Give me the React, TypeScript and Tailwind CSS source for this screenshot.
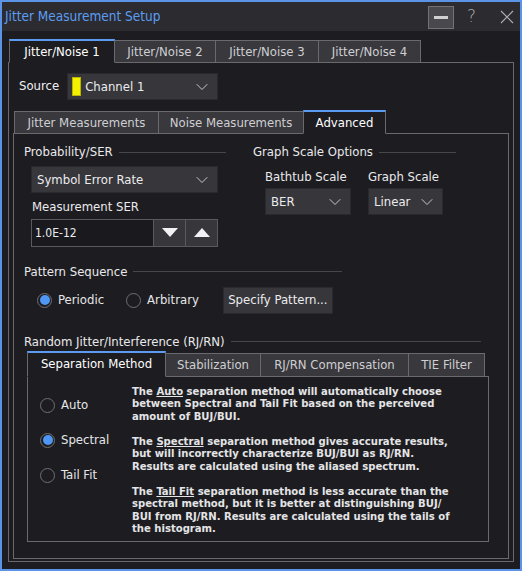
import { ChevronDown } from "lucide-react";

const font = "font-['DejaVu_Sans_Condensed','DejaVu_Sans',sans-serif]";

const Tab = ({ label, active, w, tall }: { label: string; active?: boolean; w: string; tall?: boolean }) => (
    <div
        className={`${w} relative flex items-center justify-center text-[13px] border border-[#6a6a6e] -mr-px ${
            active
                ? `${tall ? "h-[26px]" : "h-[24px]"} bg-[#1d1d21] text-white border-t-2 border-t-[#5b9cf2] border-b-[#1d1d21] z-10`
                : `${tall ? "h-[24px]" : "h-[23px]"} bg-[#38383d] text-[#cfcfd2]`
        }`}
    >
        {label}
    </div>
);

const Dropdown = ({ label, w, swatch }: { label: string; w: string; swatch?: boolean }) => (
    <div className={`${w} h-[27px] flex items-center bg-[#36363b] border border-[#2a2a2e] pl-[4px] pr-[5px] text-[13px] text-[#ececee]`}>
        {swatch && <span className="w-[9px] h-[19px] bg-[#f5f000] mr-[3px] border border-[#b8b400]" />}
        <span className="flex-1 pl-[1px]">{label}</span>
        <ChevronDown size={20} strokeWidth={1.2} className="text-[#c8c8cc]" />
    </div>
);

const GroupHeader = ({ label, lineW }: { label: string; lineW: string }) => (
    <div className="flex items-center h-[18px]">
        <span className="text-[13px] text-[#eaeaec] whitespace-nowrap">{label}</span>
        <span className={`${lineW} h-px bg-[#46464b] ml-[6px]`} />
    </div>
);

const Radio = ({ label, checked }: { label: string; checked?: boolean }) => (
    <div className="flex items-center gap-[6px] h-[19px] text-[13px] text-[#e6e6e8]">
        <span className="w-[15px] h-[15px] rounded-full border-[1.5px] border-[#707074] bg-[#1d1d21] flex items-center justify-center">
            {checked && <span className="w-[10px] h-[10px] rounded-full bg-[#4e97f5]" />}
        </span>
        {label}
    </div>
);

const App = () => {
    return (
        <div className={`${font} w-[522px] h-[571px] border-2 border-[#5b94e6] bg-[#1d1d21] flex flex-col`}>
            {/* title bar */}
            <div className="h-[29px] bg-[#2b2b30] flex items-center pl-[3px] pr-[6px]">
                <span className="flex-1 text-[13.5px] text-[#5c9df2]">Jitter Measurement Setup</span>
                <div className="w-[26px] h-[23px] mt-[2px] bg-[#48484d] border border-[#727276] flex items-center justify-center">
                    <span className="w-[14px] h-[3px] bg-[#d0d0d2]" />
                </div>
                <span className="ml-[13px] mt-[1px] text-[17px] text-[#a8a8ac] font-['DejaVu_Sans',sans-serif] font-extralight">?</span>
                <svg width="14" height="14" viewBox="0 0 14 14" className="ml-[24px] mt-[1px]">
                    <path d="M1 1 L13 13 M13 1 L1 13" stroke="#b0b0b4" strokeWidth="1.1" />
                </svg>
            </div>

            {/* outer tabs */}
            <div className="mt-[8px] ml-[7px] flex items-end">
                <Tab label="Jitter/Noise 1" active w="w-[106px]" />
                <Tab label="Jitter/Noise 2" w="w-[102px]" />
                <Tab label="Jitter/Noise 3" w="w-[104px]" />
                <Tab label="Jitter/Noise 4" w="w-[103px]" />
            </div>
            <div className="ml-[6px] w-[506px] h-[500px] -mt-px border border-[#6a6a6e] flex flex-col">
                <div className="flex items-center mt-[10px] ml-[10px]">
                    <span className="text-[13px] text-[#f0f0f2] mr-[8px] -mt-[1px]">Source</span>
                    <Dropdown label="Channel 1" swatch w="w-[151px] h-[26px]" />
                </div>

                {/* inner tabs */}
                <div className="mt-[10px] ml-[5px] flex items-end">
                    <Tab label="Jitter Measurements" w="w-[145px]" />
                    <Tab label="Noise Measurements" w="w-[146px]" />
                    <Tab label="Advanced" active w="w-[83px]" />
                </div>
                <div className="ml-[4px] w-[496px] h-[426px] -mt-px border border-[#6a6a6e] pl-[10px] pt-[9px] flex flex-col">
                    <div className="flex">
                        <div className="w-[229px]">
                            <GroupHeader label="Probability/SER" lineW="w-[107px]" />
                            <div className="mt-[5px] ml-[7px]">
                                <Dropdown label="Symbol Error Rate" w="w-[187px]" />
                            </div>
                            <div className="mt-[4px] ml-[8px] text-[13px] text-[#eaeaec]">Measurement SER</div>
                            <div className="mt-[2px] ml-[7px] w-[187px] h-[28px] flex border border-[#5a5a5e] bg-[#1a1a1e]">
                                <div className="flex-1 flex items-center pl-[3px] text-[12px] text-[#ececee]">1.0E-12</div>
                                <div className="w-[32px] border-l border-[#5a5a5e] bg-[#36363b] flex items-center justify-center">
                                    <svg width="16" height="9" viewBox="0 0 16 9">
                                        <path d="M0 0 H16 L8 9 Z" fill="#f2f2f4" />
                                    </svg>
                                </div>
                                <div className="w-[32px] border-l border-[#5a5a5e] bg-[#36363b] flex items-center justify-center">
                                    <svg width="16" height="9" viewBox="0 0 16 9">
                                        <path d="M0 9 H16 L8 0 Z" fill="#f2f2f4" />
                                    </svg>
                                </div>
                            </div>
                        </div>
                        <div>
                            <GroupHeader label="Graph Scale Options" lineW="w-[77px]" />
                            <div className="flex gap-[17px] ml-[12px] mt-[6px]">
                                <div>
                                    <div className="text-[13px] text-[#eaeaec] h-[14px]">Bathtub Scale</div>
                                    <div className="mt-[7px]">
                                        <Dropdown label="BER" w="w-[86px]" />
                                    </div>
                                </div>
                                <div>
                                    <div className="text-[13px] text-[#eaeaec] h-[14px]">Graph Scale</div>
                                    <div className="mt-[7px]">
                                        <Dropdown label="Linear" w="w-[75px]" />
                                    </div>
                                </div>
                            </div>
                        </div>
                    </div>

                    <div className="mt-[16px]">
                        <GroupHeader label="Pattern Sequence" lineW="w-[209px]" />
                    </div>
                    <div className="flex items-center mt-[6px] ml-[13px]">
                        <Radio label="Periodic" checked />
                        <div className="ml-[22px]">
                            <Radio label="Arbitrary" />
                        </div>
                        <div className="ml-[24px] w-[110px] h-[27px] bg-[#36363b] border border-[#2a2a2e] flex items-center justify-center text-[13px] text-[#ececee]">
                            Specify Pattern...
                        </div>
                    </div>

                    <div className="mt-[19px]">
                        <GroupHeader label="Random Jitter/Interference (RJ/RN)" lineW="w-[250px]" />
                    </div>
                    <div className="ml-[3px] flex items-end">
                        <Tab label="Separation Method" active tall w="w-[139px]" />
                        <Tab label="Stabilization" tall w="w-[96px]" />
                        <Tab label="RJ/RN Compensation" tall w="w-[149px]" />
                        <Tab label="TIE Filter" tall w="w-[77px]" />
                    </div>
                    <div className="ml-[3px] w-[462px] h-[166px] -mt-px border border-[#6a6a6e] flex">
                        <div className="w-[104px] pl-[12px] pt-[19px] flex flex-col gap-[16px]">
                            <Radio label="Auto" />
                            <Radio label="Spectral" checked />
                            <Radio label="Tail Fit" />
                        </div>
                        <div className="pt-[9px] text-[11.2px] font-bold leading-[12.5px] text-[#e4e4e6]">
                            <p className="mb-[12.5px]">
                                The <u>Auto</u> separation method will automatically choose<br />
                                between Spectral and Tail Fit based on the perceived<br />
                                amount of BUJ/BUI.
                            </p>
                            <p className="mb-[12.5px]">
                                The <u>Spectral</u> separation method gives accurate results,<br />
                                but will incorrectly characterize BUJ/BUI as RJ/RN.<br />
                                Results are calculated using the aliased spectrum.
                            </p>
                            <p>
                                The <u>Tail Fit</u> separation method is less accurate than the<br />
                                spectral method, but it is better at distinguishing BUJ/<br />
                                BUI from RJ/RN. Results are calculated using the tails of<br />
                                the histogram.
                            </p>
                        </div>
                    </div>
                </div>
            </div>
        </div>
    );
};

export default App;
